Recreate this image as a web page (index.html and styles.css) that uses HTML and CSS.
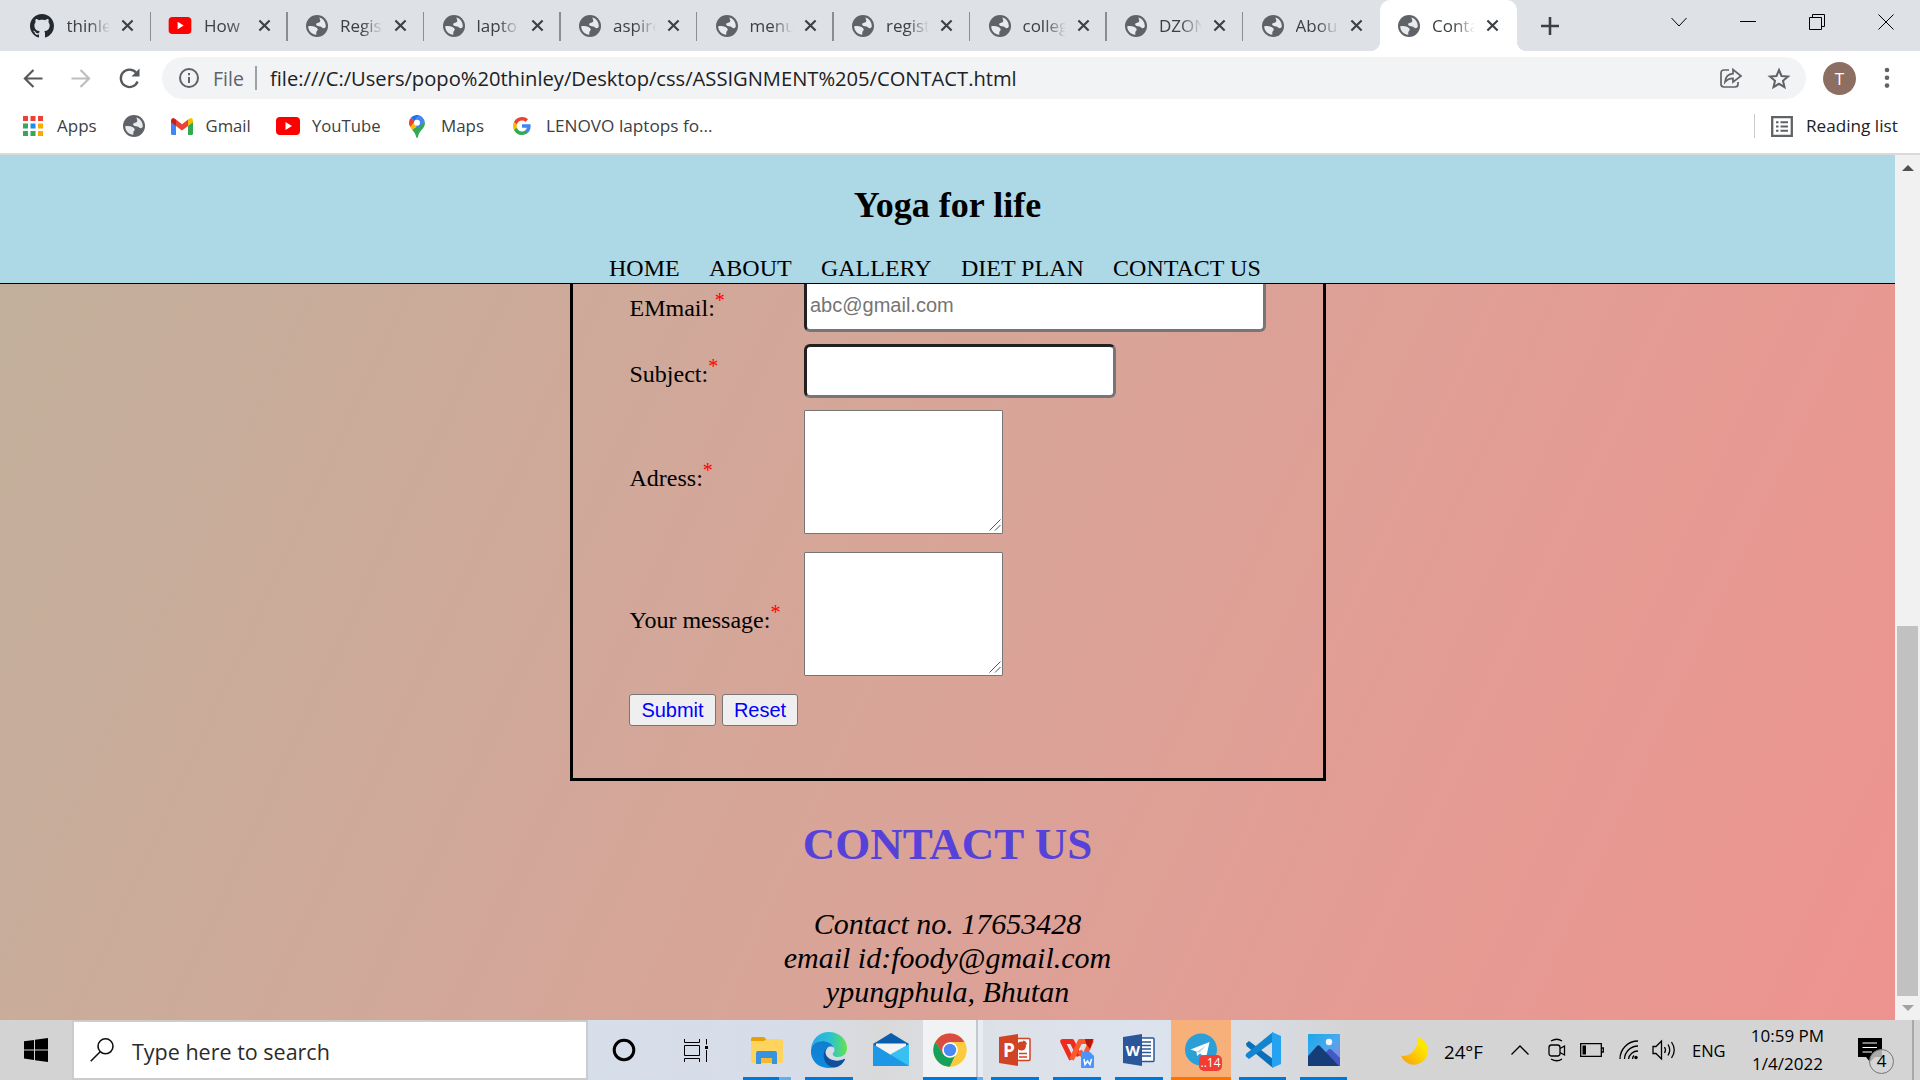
FILE: index.html
```
<!DOCTYPE html>
<html lang="en">
<head>
<meta charset="utf-8">
<title>Contact</title>
<link rel="stylesheet" href="styles.css">
</head>
<body>
<svg class="defs" width="0" height="0">
  <symbol id="globe" viewBox="0 0 24 24"><circle cx="12" cy="12" r="12" fill="#5f6368"/><path fill="#e9eaec" d="M14.500 2.800C18.500 3.800 21.500 7.500 21.600 12C21.500 14.500 19 15 17.500 13.500C16.500 12.300 14.500 12.300 13 12C10.500 11.300 10.500 9.200 12.500 8.800C14.800 8.400 16.200 7 15.400 5.200ZM2.400 12.300C5 11.800 8 12 10.300 13C12.800 14.200 13.500 16 12.200 17.300C11 18.500 11.200 20 11.300 21.600C6.500 21.300 2.500 17.300 2.400 12.300Z"/></symbol>
  <symbol id="close" viewBox="0 0 14 14"><path d="M1.500 1.500L12.500 12.500M12.500 1.500L1.500 12.500" stroke="#3c4043" stroke-width="2.300" fill="none"/></symbol>
  <symbol id="youtube" viewBox="0 0 24 18"><rect width="24" height="18" rx="4" fill="#f00"/><path d="M9.500 5L16 9L9.500 13Z" fill="#fff"/></symbol>
  <symbol id="grip" viewBox="0 0 12 12"><path d="M.5 11.500L11.500 .5M6 11.500L11.500 6" stroke="#555" stroke-width="1" fill="none"/></symbol>
</svg>

<div class="tabstrip">
  <div class="tab"><svg class="fav" viewBox="0 0 16 16"><path fill="#24292f" d="M8 0C3.580 0 0 3.580 0 8c0 3.540 2.290 6.530 5.470 7.590.4.070.55-.17.55-.38 0-.19-.01-.82-.01-1.490-2.010.37-2.530-.49-2.690-.94-.09-.23-.48-.94-.82-1.130-.28-.15-.68-.52-.01-.53.63-.01 1.080.58 1.230.82.72 1.210 1.870.87 2.330.66.07-.52.28-.87.51-1.070-1.780-.2-3.640-.89-3.640-3.950 0-.87.31-1.590.82-2.150-.08-.2-.36-1.020.08-2.120 0 0 .67-.21 2.200.82.64-.18 1.320-.27 2-.27s1.360.09 2 .27c1.530-1.040 2.200-.82 2.200-.82.44 1.100.16 1.920.08 2.120.51.56.82 1.270.82 2.150 0 3.070-1.870 3.750-3.650 3.950.29.25.54.73.54 1.480 0 1.070-.01 1.930-.01 2.200 0 .21.15.46.55.38A8.010 8.010 0 0 0 16 8c0-4.420-3.580-8-8-8z"/></svg><span class="tt">thinle</span><svg class="x"><use href="#close"/></svg></div>
  <div class="tab"><svg class="fav yt"><use href="#youtube"/></svg><span class="tt plain">How</span><svg class="x"><use href="#close"/></svg></div>
  <div class="tab"><svg class="fav gl"><use href="#globe"/></svg><span class="tt">Regis</span><svg class="x"><use href="#close"/></svg></div>
  <div class="tab"><svg class="fav gl"><use href="#globe"/></svg><span class="tt">lapto</span><svg class="x"><use href="#close"/></svg></div>
  <div class="tab"><svg class="fav gl"><use href="#globe"/></svg><span class="tt">aspire</span><svg class="x"><use href="#close"/></svg></div>
  <div class="tab"><svg class="fav gl"><use href="#globe"/></svg><span class="tt">menu</span><svg class="x"><use href="#close"/></svg></div>
  <div class="tab"><svg class="fav gl"><use href="#globe"/></svg><span class="tt">regist</span><svg class="x"><use href="#close"/></svg></div>
  <div class="tab"><svg class="fav gl"><use href="#globe"/></svg><span class="tt">colleg</span><svg class="x"><use href="#close"/></svg></div>
  <div class="tab"><svg class="fav gl"><use href="#globe"/></svg><span class="tt">DZON</span><svg class="x"><use href="#close"/></svg></div>
  <div class="tab last"><svg class="fav gl"><use href="#globe"/></svg><span class="tt">Abou</span><svg class="x"><use href="#close"/></svg></div>
  <div class="tab active"><svg class="fav gl"><use href="#globe"/></svg><span class="tt">Conta</span><svg class="x"><use href="#close"/></svg></div>
  <svg class="plus" viewBox="0 0 18 18"><path d="M9 0V18M0 9H18" stroke="#3c4043" stroke-width="2.600"/></svg>
  <div class="winbtns">
    <svg viewBox="0 0 16 16"><path d="M.5 4L8 12L15.500 4"/></svg>
    <svg viewBox="0 0 16 16"><path d="M0 7.500H16"/></svg>
    <svg viewBox="0 0 16 16"><path d="M.5 3.500H12.500V15.500H.5ZM3.500 3.500V.5H15.500V12.500H12.500"/></svg>
    <svg viewBox="0 0 16 16"><path d="M.5 .5L15.500 15.500M15.500 .5L.5 15.500"/></svg>
  </div>
</div>

<div class="toolbar">
  <svg class="nav-i" viewBox="0 0 20 20"><path d="M20 10H2M10.500 1L1.500 10L10.500 19"/></svg>
  <svg class="nav-i off" viewBox="0 0 20 20"><path d="M0 10H18M9.500 1L18.500 10L9.500 19"/></svg>
  <svg class="nav-i reload" viewBox="0 0 21 21"><path d="M18.600 13.500A8.700 8.700 0 1 1 17 4.500"/><path d="M20.500 .5V8.500H12.500Z" class="fill"/></svg>
  <div class="omnibox">
    <svg class="info" viewBox="0 0 20 20"><circle cx="10" cy="10" r="9"/><path d="M10 9V15M10 5V7.200"/></svg>
    <span class="scheme">File</span>
    <span class="vsep"></span>
    <span class="url">file:///C:/Users/popo%20thinley/Desktop/css/ASSIGNMENT%205/CONTACT.html</span>
    <svg class="share" viewBox="0 0 22 20"><path d="M9 2H4Q1 2 1 5V16Q1 19 4 19H15Q18 19 18 16V14"/><path d="M5 14C5.500 9 8.500 6 13 5.700V1.500L21 8L13 14V10.300C9.500 10.300 7 11.500 5 14Z"/></svg>
    <svg class="star" viewBox="0 0 22 21"><path d="M11 2L13.500 8L20 8.600L15 12.800L16.500 19.200L11 15.800L5.500 19.200L7 12.800L2 8.600L8.500 8Z"/></svg>
  </div>
  <div class="avatar">T</div>
  <svg class="dots" viewBox="0 0 6 22"><circle cx="3" cy="3" r="2.300"/><circle cx="3" cy="10.800" r="2.300"/><circle cx="3" cy="18.600" r="2.300"/></svg>
</div>

<div class="bookmarks">
  <svg class="b-apps" viewBox="0 0 20 20"><path fill="#ea4335" d="M0 0h5v5H0zM7.500 0h5v5h-5zM15 0h5v5h-5z"/><path fill="#34a853" d="M0 7.500h5v5H0zM0 15h5v5H0zM7.500 15h5v5h-5z"/><path fill="#1a8cf0" d="M7.500 7.500h5v5h-5z"/><path fill="#fba900" d="M15 7.500h5v5h-5zM15 15h5v5h-5z"/></svg>
  <span class="t-apps">Apps</span>
  <svg class="b-globe"><use href="#globe"/></svg>
  <svg class="b-gmail" viewBox="0 0 22 17"><path fill="#4285f4" d="M0 3V15.500Q0 17 1.500 17H5V7Z"/><path fill="#34a853" d="M22 3V15.500Q22 17 20.500 17H17V7Z"/><path fill="#ea4335" d="M5 1.500L11 6.200L17 1.500V8L11 12.500L5 8Z"/><path fill="#c5221f" d="M0 2.500Q0 0 2.200 0Q3.200 0 5 1.500V8L0 4.300Z"/><path fill="#fbbc04" d="M22 2.500Q22 0 19.800 0Q18.800 0 17 1.500V8L22 4.300Z"/></svg>
  <span class="t-gmail">Gmail</span>
  <svg class="b-yt"><use href="#youtube"/></svg>
  <span class="t-yt">YouTube</span>
  <svg class="b-maps" viewBox="0 0 16 23"><path fill="#34a853" d="M15.700 6.500C17 12 12.500 14 10 18.500C9 20.500 9 23 8 23S7 20 5.800 18.200L3 14.500Z"/><path fill="#fbbc04" d="M3.200 14.800C1.500 12.500 0 10.800 0 8L2 3.500L8 8L11.500 9Z"/><path fill="#ea4335" d="M0 8C0 5.800 .7 4 2 2.700L6 6L1.500 11.800Q0 9.800 0 8Z"/><path fill="#1a73e8" d="M2 2.700C3.500 1 5.500 0 8 0C9 0 10 .2 10.600 .4L5.500 6Z"/><path fill="#4285f4" d="M10.500 .4C13 1.200 15 3.500 15.800 6.300L8 14L5.500 6Z"/><circle cx="8" cy="7.800" r="3" fill="#fff"/></svg>
  <span class="t-maps">Maps</span>
  <svg class="b-g" viewBox="0 0 18 18"><path fill="#4285f4" d="M17.640 9.200c0-.64-.06-1.250-.16-1.840H9v3.480h4.840a4.140 4.140 0 0 1-1.800 2.720v2.260h2.920c1.700-1.570 2.680-3.880 2.680-6.620z"/><path fill="#34a853" d="M9 18c2.430 0 4.470-.8 5.960-2.180l-2.920-2.260c-.8.540-1.840.86-3.040.86-2.340 0-4.330-1.580-5.040-3.710H.96v2.330A9 9 0 0 0 9 18z"/><path fill="#fbbc05" d="M3.960 10.710a5.400 5.400 0 0 1 0-3.420V4.960H.96a9 9 0 0 0 0 8.080z"/><path fill="#ea4335" d="M9 3.580c1.320 0 2.500.45 3.440 1.350l2.580-2.580A9 9 0 0 0 .96 4.960l3 2.330C4.670 5.160 6.660 3.580 9 3.580z"/></svg>
  <span class="t-len">LENOVO laptops fo...</span>
  <span class="bsep"></span>
  <svg class="b-read" viewBox="0 0 22 21"><path d="M1.200 1.200H20.800V19.800H1.200Z" fill="none" stroke="#5f6368" stroke-width="2.300"/><path d="M5 6.300H7.500M5 10.500H7.500M5 14.700H7.500M9.500 6.300H17M9.500 10.500H17M9.500 14.700H17" stroke="#5f6368" stroke-width="2"/></svg>
  <span class="t-read">Reading list</span>
</div>

<div class="viewport">
  <div class="page">
    <header class="site-head">
      <h2>Yoga for life</h2>
      <nav><a>HOME</a><a>ABOUT</a><a>GALLERY</a><a>DIET PLAN</a><a>CONTACT US</a></nav>
    </header>
    <main>
      <form class="card">
        <label>EMmail:<sup>*</sup></label><input class="wide" type="text" placeholder="abc@gmail.com">
        <label>Subject:<sup>*</sup></label><input class="narrow" type="text">
        <label class="low">Adress:<sup>*</sup></label><div class="area"><textarea></textarea><svg class="grip"><use href="#grip"/></svg></div>
        <label class="low">Your message:<sup>*</sup></label><div class="area"><textarea></textarea><svg class="grip"><use href="#grip"/></svg></div>
        <div class="buttons"><button type="button" class="submit">Submit</button><button type="button" class="reset">Reset</button></div>
      </form>
      <h1>CONTACT US</h1>
      <address>Contact no. 17653428<br>email id:foody@gmail.com<br>ypungphula, Bhutan</address>
    </main>
  </div>
  <div class="scrollbar">
    <svg viewBox="0 0 12 6"><path d="M0 6L6 0L12 6Z" fill="#505050"/></svg>
    <div class="thumb"></div>
    <svg viewBox="0 0 12 6"><path d="M0 0L6 6L12 0Z" fill="#a3a3a3"/></svg>
  </div>
</div>

<div class="taskbar">
  <div class="start"><svg viewBox="0 0 24 24"><path d="M0 3.300L10 1.900V11.400H0ZM11 1.700L24 0V11.400H11ZM0 12.400H10V22L0 20.600ZM11 12.400H24V24L11 22.200Z"/></svg></div>
  <div class="search">
    <svg viewBox="0 0 24 24"><circle cx="15.500" cy="8.300" r="7.500"/><path d="M10.200 13.800L.7 23.300"/></svg>
    <span>Type here to search</span>
  </div>
  <svg class="cortana" viewBox="0 0 24 24"><circle cx="12" cy="12" r="9.800" fill="none" stroke="#000" stroke-width="3"/></svg>
  <svg class="taskview" viewBox="0 0 24 23"><path d="M.5 0V3.500H15.500V0M.5 23V19.500H15.500V23M.5 6.500H15.500V16.500H.5ZM22.500 0V5.500M22.500 11V23" fill="none" stroke="#000"/><path d="M21 7h3v3h-3z"/></svg>

  <div class="app first two"><svg viewBox="0 0 36 36"><path fill="#e8a000" d="M2 7q0-2 2-2h10q2 0 3 2l1 1v5H2z"/><path fill="#ffd45e" d="M2 9h13l3-2h14q2 0 2 2v20q0 2-2 2H4q-2 0-2-2z"/><path fill="#3793dd" d="M7 21q0-2 2-2h17q2 0 2 2v11h-5v-6H12v6H7z"/><path fill="#f5b92e" d="M12 26h11v5H12z"/></svg></div>
  <div class="app run"><svg viewBox="0 0 36 36"><defs><linearGradient id="e1" x1="0" x2="1"><stop stop-color="#21a9ec"/><stop offset=".55" stop-color="#2cc3cf"/><stop offset="1" stop-color="#66e24e"/></linearGradient><linearGradient id="e2" x1="0" y1="0" x2="0" y2="1"><stop stop-color="#127dd0"/><stop offset="1" stop-color="#0a8be0"/></linearGradient></defs><path fill="url(#e1)" d="M0 17C1 7 8 0 18 0c11 0 18 8 18 16 0 6-4 9-9 9-4 0-6-2-5-4 1-1 1.500-2 1.500-4C23 12 17 9 12 9 6 9 2 12 0 17z"/><path fill="url(#e2)" d="M0 18C1 12 6 9 12 9c5 0 10 3 11 7-3-3-8-1-9 4-1 6 4 14 10 15C10 39-1 30 0 18z"/><path fill="#0f4f9e" d="M17 15.500c-7 3-6 19 7 20 5-1 8-4 10-8 0-1-1-1-2 0-7 3-17 0-17.500-7 0-2 1-4 2.500-5z"/></svg></div>
  <div class="app"><svg viewBox="0 0 36 36"><path fill="#0a5cad" d="M0 12L18 1L36 12L31 18H5Z"/><path fill="#f4f4f4" d="M3 11.500H33V24H3Z"/><path fill="#36c1f2" d="M36 12V34H10L18 22Z"/><path fill="#1e97e6" d="M0 12L36 34H0Z"/></svg></div>
  <div class="app chrome"><svg viewBox="0 0 34 34"><circle cx="17" cy="17" r="16.700" fill="#fbcb3f"/><path fill="#da4c42" d="M2.500 8.700A16.700 16.700 0 0 1 31.500 9H17L9.500 20.500Z"/><path fill="#16a05c" d="M2.500 8.700L10 21L22 22.500L16.800 33.700A16.700 16.700 0 0 1 2.500 8.700Z"/><circle cx="17" cy="17" r="7.800" fill="#fff"/><circle cx="17" cy="17" r="6.200" fill="#4a8af4"/></svg></div>
  <div class="app run near"><svg viewBox="0 0 36 36"><rect x="18" y="6.500" width="15" height="22" rx="1" fill="#fff" stroke="#d04423" stroke-width="1.500"/><path d="M22 21.500H30M22 25H30" stroke="#d04423" stroke-width="1.500"/><circle cx="24.500" cy="14" r="4.500" fill="#d04423"/><path d="M26 12.500V8.500A4.500 4.500 0 0 1 30 12.500Z" fill="#d04423"/><path fill="#d04423" d="M2 5L21 2V34L2 31Z"/><text x="6" y="24.500" class="glyph">P</text></svg></div>
  <div class="app run"><svg viewBox="0 0 36 36"><path fill="none" stroke="#ef2b1d" stroke-width="5" stroke-linejoin="round" d="M12.500 27.500L3.700 9.500H13L20 24"/><path fill="none" stroke="#fb5a2c" stroke-width="5" stroke-linejoin="round" d="M12.500 27.500L21 9.500H32L25 25L20.500 19"/><path fill="#b8150c" d="M26 7H34.500L31 17L27 12Z"/><path fill="#4c94fb" d="M22 20h9l4 4v11q0 1-1 1H23q-1 0-1-1z"/><path fill="none" stroke="#fff" stroke-width="1.500" d="M25 27L26 32.500L28.500 29L31 32.500L32.500 27"/></svg></div>
  <div class="app run"><svg viewBox="0 0 36 36"><rect x="18" y="6" width="15" height="23.500" rx="1" fill="#fff" stroke="#2b579a" stroke-width="1.500"/><path d="M21 10H30M21 13.500H30M21 17H30M21 20.500H30M21 24H30" stroke="#2b579a" stroke-width="1.500"/><path fill="#2b579a" d="M2 5L21 2V34L2 31Z"/><text x="4.500" y="24" class="glyph w">W</text></svg></div>
  <div class="app near tg"><svg viewBox="0 0 36 36"><circle cx="18" cy="17.500" r="16" fill="#2b9fd8"/><path fill="#fff" d="M7.500 17.500L26.500 10L23 26L17 21.500L14 24L13.500 19.500Z"/><path d="M13.500 19.800L23 13.500L16.300 21" fill="#bcd9ea"/></svg><span class="badge">..14</span></div>
  <div class="app run near slim"><svg viewBox="0 0 36 36"><path fill="#0a6fb8" d="M1 11.500L4 9L28 27V36L1.500 14Z"/><path fill="#1385cf" d="M1 24.500L4 27L28 9.500V0L1.500 21.500Q0 23 1 24.500Z"/><path fill="#25a2f0" d="M27 0L36 4V32L27 36Z"/></svg></div>
  <div class="app run slim"><svg viewBox="0 0 36 36"><defs><linearGradient id="p1" x1="0" y1="0" x2="1" y2="1"><stop stop-color="#18a8ea"/><stop offset=".5" stop-color="#49a9ee"/><stop offset="1" stop-color="#9a7be0"/></linearGradient></defs><rect x="2" y="2" width="32" height="32" rx="1" fill="url(#p1)"/><path fill="#4459c4" d="M16 24L22.500 17.500Q24 16.500 25.500 17.800L34 26V34H20Z"/><path fill="#173d78" d="M2 24L11 14Q12.500 12.500 14 14L33 34H2Z"/><circle cx="23" cy="10" r="3.200" fill="#f5f5f5"/></svg></div>

  <div class="tray">
    <svg class="moon" viewBox="0 0 28 28"><defs><linearGradient id="m" x1="1" y1="0" x2="0" y2="1"><stop offset=".3" stop-color="#ffe500"/><stop offset="1" stop-color="#f89a10"/></linearGradient></defs><path fill="url(#m)" d="M16.500 0A14.500 14.500 0 1 1 0 19.500C10 21 19 12 16.500 0Z"/></svg>
    <span class="temp">24°F</span>
    <svg class="chev" viewBox="0 0 18 10"><path d="M.5 9.500L9 1L17.500 9.500"/></svg>
    <svg class="cam" viewBox="0 0 18 24"><rect x="1" y="7" width="11" height="11" rx="2.500"/><path d="M12 10.500L16.500 8V17L12 14.500M3 3Q9 -.5 14 3M3 21Q9 24.500 14 21"/></svg>
    <svg class="bat" viewBox="0 0 24 14"><path d="M.7 .7H21.300V13.300H.7ZM21.500 5H23.300V9H21.500"/><path d="M2.500 2.500H6V11.500H2.500Z" fill="#000" stroke="none"/></svg>
    <svg class="wifi" viewBox="0 0 20 20"><path d="M1 19A18 18 0 0 1 19 1M5.500 19A13.500 13.500 0 0 1 19 6M9.500 19A9.500 9.500 0 0 1 19 11M13.500 19A5 5 0 0 1 15 15.500"/><circle cx="17" cy="17.500" r="1.700" fill="#000" stroke="none"/></svg>
    <svg class="vol" viewBox="0 0 24 20"><path d="M1 6.500H4L9.500 1V19L4 13.500H1ZM12.500 7Q14.500 10 12.500 13M16 4.500Q19.500 10 16 15.500M19.500 2Q25 10 19.500 18"/></svg>
    <span class="eng">ENG</span>
    <div class="clock"><span>10:59 PM</span><span>1/4/2022</span></div>
    <div class="notif"><svg viewBox="0 0 24 24"><path d="M0 0H24V19H17L12 24L8 19H0Z"/><path d="M4.500 5H19M4.500 9.500H19M4.500 14H14" stroke="#fff" stroke-width="1.200"/></svg><span class="count">4</span></div>
    <div class="edge"></div>
  </div>
</div>
</body>
</html>
```
FILE: styles.css
```
* { box-sizing: border-box; }
html, body { margin: 0; height: 100%; }
body { width: 1920px; height: 1080px; overflow: hidden; display: flex; flex-direction: column; background: #fff; font-family: "Open Sans", "Noto Sans", sans-serif; }
svg { display: block; flex: none; overflow: visible; }
span { white-space: nowrap; flex: none; }
.defs { position: absolute; }

/* tab strip */
.tabstrip { height: 51px; flex: none; background: #dee1e6; display: flex; align-items: center; padding-left: 14.500px; }
.tab { width: 136.500px; height: 51px; flex: none; display: flex; align-items: center; padding-left: 15px; position: relative; }
.tab::after { content: ""; position: absolute; right: 0; top: 12px; width: 1.500px; height: 29px; background: #8a8d91; }
.tab.last::after, .tab.active::after { display: none; }
.fav { width: 24px; height: 24px; margin-right: 13px; }
.fav.yt { height: 17px; margin-left: 2px; margin-right: 12px; }
.fav.gl { width: 22px; height: 22px; margin-left: 3.500px; margin-right: 12px; }
.tt { width: 43px; font-size: 17px; line-height: 24px; margin-right: 11px; color: #3c4043; mask-image: linear-gradient(90deg, #000 50%, transparent 100%); -webkit-mask-image: linear-gradient(90deg, #000 50%, transparent 100%); }
.tt.plain { mask-image: linear-gradient(90deg, #000 50%, #0008 100%); -webkit-mask-image: linear-gradient(90deg, #000 50%, #0008 100%); }
.x { width: 13px; height: 13px; }
.tab.active { width: 137.500px; background: #fff; border-radius: 10px 10px 0 0; }
.tab.active::before { content: ""; position: absolute; bottom: 0; left: -10px; right: -10px; height: 10px; background: radial-gradient(circle at 0 0, transparent 10px, #fff 10.500px) left / 10px 10px no-repeat, radial-gradient(circle at 100% 0, transparent 10px, #fff 10.500px) right / 10px 10px no-repeat; }
.plus { width: 18px; height: 18px; margin-left: 24px; }
.winbtns { display: flex; gap: 53px; margin: 0 26.500px 8px auto; }
.winbtns svg { width: 16px; height: 16px; fill: none; stroke: #000; }

/* toolbar */
.toolbar { height: 53px; flex: none; display: flex; align-items: center; padding: 1px 0 0 23px; }
.nav-i { width: 20px; height: 19px; margin-right: 28px; fill: none; stroke: #55595e; stroke-width: 2.300; }
.nav-i.off { stroke: #bcbec1; }
.nav-i.reload { width: 21px; height: 21px; margin-right: 22px; }
.nav-i .fill { fill: #55595e; stroke: none; }
.omnibox { width: 1644px; height: 42px; border-radius: 21px; background: #f1f3f4; display: flex; align-items: center; padding-left: 17px; }
.omnibox svg { fill: none; stroke: #5f6368; stroke-width: 2; }
.info { width: 20px; height: 20px; margin-right: 14px; }
.scheme { width: 42px; font-size: 19.500px; color: #5f6368; }
.vsep { width: 1.500px; height: 24px; background: #9aa0a6; margin-right: 13.500px; }
.url { font-size: 20.150px; color: #202124; }
.share { width: 22px; height: 20px; margin-left: auto; margin-right: 26px; }
.omnibox .share { stroke-width: 1.700; }
.star { width: 22px; height: 21px; margin-right: 16px; }
.avatar { width: 33px; height: 33px; border-radius: 50%; background: #8d6e63; color: #fff; font-size: 17px; line-height: 33px; text-align: center; margin-left: 17px; }
.dots { width: 6px; height: 22px; margin-left: 28px; fill: #5f6368; }

/* bookmarks bar */
.bookmarks { height: 51px; flex: none; border-bottom: 2px solid #dadada; display: flex; align-items: center; padding: 0 0 5px 23px; font-size: 17px; line-height: 24px; color: #3c4043; }
.b-apps { width: 20px; height: 20px; margin-right: 14px; }
.t-apps { width: 66px; }
.b-globe { width: 22px; height: 22px; margin-right: 26px; }
.b-gmail { width: 22px; height: 17px; margin-right: 12.500px; }
.t-gmail { width: 70.500px; font-size: 16.700px; }
.b-yt { width: 24px; height: 18px; margin-right: 12px; }
.t-yt { width: 97px; font-size: 16.700px; }
.b-maps { width: 16px; height: 23px; margin-right: 16px; }
.t-maps { width: 72px; font-size: 16.900px; }
.b-g { width: 18px; height: 18px; margin-right: 15px; }
.t-len { font-size: 17.200px; }
.bsep { width: 1.500px; height: 24px; background: #c8cacd; margin: 0 16px 0 auto; }
.b-read { width: 22px; height: 21px; margin-right: 13px; }
.t-read { width: 114px; font-size: 17.150px; color: #202124; }

/* browser viewport */
.viewport { height: 865px; flex: none; display: flex; }
.page { width: 1895px; overflow: hidden; display: flex; flex-direction: column; font-family: "Liberation Serif", serif; color: #000; background: linear-gradient(115deg, #c2b09c 0%, #d9a498 50%, #ee938f 100%) 0 129px / 100% 736px no-repeat; }
.site-head { height: 129px; flex: none; background: #add8e6; border-bottom: 1px solid #000; position: relative; z-index: 1; padding-top: 30px; }
.site-head h2 { margin: 0 0 29px; font-size: 36px; line-height: 40px; text-align: center; }
.site-head nav { display: flex; gap: 29.300px; padding-left: 609px; font-size: 24px; line-height: 28px; }
.site-head nav a { white-space: nowrap; }
.card { width: 756px; height: 597px; margin: -100px auto 0 570px; border: 3px solid #000; padding: 91px 0 0 56px; display: grid; grid-template-columns: 175px 1fr; grid-template-rows: 66px 66px 142px 142px 34px; align-items: start; }
.card label { font-size: 24px; line-height: 28px; padding: 16px 0 0 .5px; white-space: nowrap; }
.card label.low { padding-top: 54px; }
.card sup { font-size: 20px; line-height: 0; color: #f00; }
.card input { height: 54px; margin: 0; padding: 1px 3px; border: 3px inset #767676; border-radius: 6px; background: #fff; font: 20px "Liberation Sans", sans-serif; }
.card input::placeholder { color: #757575; }
.card .wide { width: 462px; }
.card .narrow { width: 312px; }
.area { width: 199px; height: 124px; position: relative; }
.area textarea { display: block; width: 100%; height: 100%; margin: 0; border: 1px solid #767676; border-radius: 1px; background: #fff; resize: none; }
.area .grip { position: absolute; right: 2px; bottom: 3px; width: 12px; height: 12px; }
.buttons { display: flex; gap: 6px; grid-column: 1 / -1; }
.buttons button { height: 32px; padding: 0; border: 1px solid #767676; border-radius: 3px; background: #efefef; color: #00f; font: 20px "Liberation Sans", sans-serif; }
.submit { width: 87px; }
.reset { width: 76px; }
main h1 { margin: 37px 0; font-size: 45px; line-height: 52px; text-align: center; color: #5642d9; }
address { font-size: 30px; line-height: 34px; text-align: center; }
.scrollbar { width: 25px; background: #f1f1f1; display: flex; flex-direction: column; align-items: center; padding: 10px 0 9px; }
.scrollbar svg { width: 12px; height: 6px; }
.thumb { width: 21px; height: 370px; background: #c1c1c1; margin: auto 0 9px; }

/* taskbar */
.taskbar { height: 60px; flex: none; display: flex; align-items: center; background: linear-gradient(90deg, #d3d3d3 0, #d3d3d3 380px, #d6deea 588px, #d7dde8 800px, #d9d9da 880px, #dde1e8 1000px, #dbe3ee 1160px, #d8dce3 1260px, #d4d4d4 1350px); }
.start { width: 72px; padding-left: 24px; }
.start svg { width: 24px; height: 24px; }
.search { width: 516px; height: 60px; background: #fff; border: 2px solid #ccc; display: flex; align-items: center; padding-left: 16px; }
.search svg { width: 24px; height: 24px; margin-right: 18px; fill: none; stroke: #111; stroke-width: 1.600; }
.search span { font-size: 21.500px; color: #2b2b2b; padding-top: 3px; }
.cortana { width: 24px; height: 24px; margin-left: 24px; }
.taskview { width: 24px; height: 23px; margin-left: 48px; }
.app { width: 48px; height: 60px; flex: none; margin-left: 14px; display: flex; align-items: center; justify-content: center; position: relative; }
.app svg { width: 36px; height: 36px; }
.app.first { margin-left: 35px; }
.app.near { margin-left: 8px; }
.app.slim { width: 47px; }
.app.run { box-shadow: inset 0 -3px #0078d7; }
.app.two { background: linear-gradient(90deg, #0078d7 36px, #62aee8 36px) bottom / 100% 3px no-repeat; }
.app.chrome { width: 60px; margin-left: 8px; padding-right: 7px; background: linear-gradient(90deg, #0078d7 54px, #62aee8 54px) bottom / 100% 3px no-repeat, linear-gradient(90deg, #f1f2f4 53px, #c3c8d0 53px, #c3c8d0 55px, #e9edf3 55px); }
.app.chrome svg { width: 34px; height: 34px; }
.app.tg { width: 60px; background: #f7b07a; box-shadow: inset 0 -3px #ff7200; }
.glyph { font: 700 19px "Open Sans", sans-serif; fill: #fff; }
.glyph.w { font-size: 15px; }
.badge { position: absolute; left: 28px; top: 35px; width: 23px; height: 16px; border-radius: 5px; background: #f23c34; color: #fff; font-size: 12px; line-height: 16px; text-align: center; }
.tray { flex: 1; height: 60px; display: flex; align-items: center; padding-left: 54px; }
.tray svg { fill: none; stroke: #000; stroke-width: 1.300; }
.tray .moon { width: 27px; height: 27px; stroke: none; }
.temp { width: 67px; margin-left: 16px; padding-top: 3px; font-size: 18.700px; }
.chev { width: 18px; height: 10px; }
.cam { width: 18px; height: 24px; margin-left: 19px; }
.bat { width: 24px; height: 14px; margin-left: 14px; }
.wifi { width: 20px; height: 20px; margin-left: 15px; }
.vol { width: 24px; height: 20px; margin-left: 13px; }
.eng { width: 59px; margin-left: 16px; font-size: 16.500px; }
.clock { width: 73px; display: flex; flex-direction: column; font-size: 17px; line-height: 28px; align-items: center; }
.notif { position: relative; margin-left: 34px; }
.notif svg { width: 24px; height: 24px; fill: #000; stroke: none; }
.count { position: absolute; left: 11px; top: 11px; width: 25px; height: 25px; border: 1.500px solid #777; border-radius: 50%; background: rgba(214, 214, 214, .8); font-size: 17px; line-height: 22px; text-align: center; }
.edge { width: 2px; height: 60px; background: #a8a8a8; margin-left: auto; margin-right: 6px; }
```
